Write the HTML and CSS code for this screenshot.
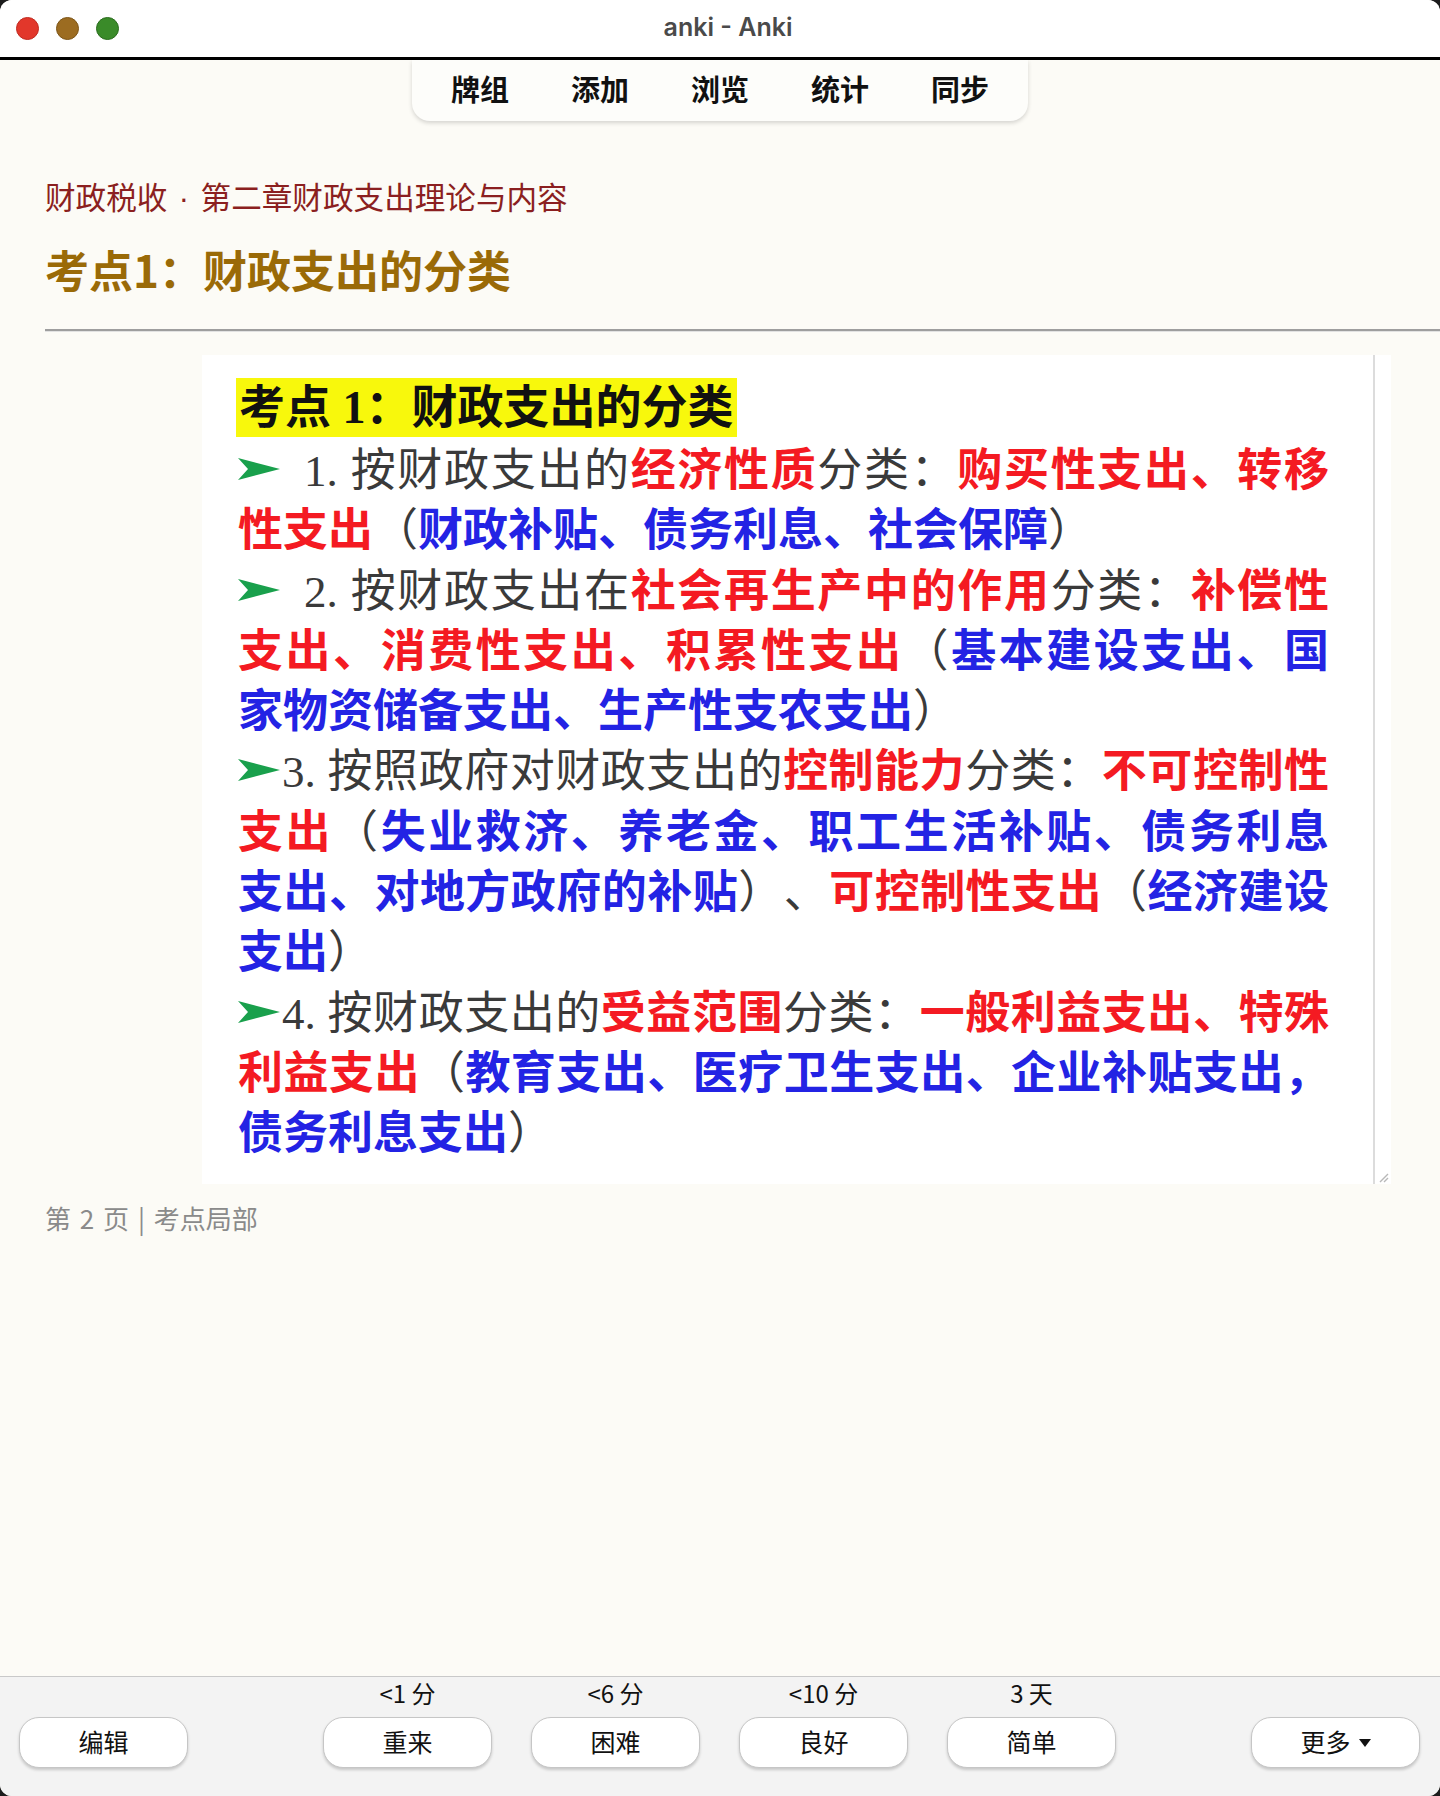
FILE: index.html
```html
<!DOCTYPE html>
<html lang="zh-CN">
<head>
<meta charset="utf-8">
<title>anki - Anki</title>
<link rel="stylesheet" href="styles.css">
</head>
<body>
<div class="window">
  <header class="titlebar">
    <div class="lights">
      <span class="light red"></span>
      <span class="light yellow"></span>
      <span class="light green"></span>
    </div>
    <div class="title">anki - Anki</div>
    <div></div>
  </header>

  <nav class="toolbar-wrap">
    <div class="toolbar">
      <span>牌组</span><span>添加</span><span>浏览</span><span>统计</span><span>同步</span>
    </div>
  </nav>

  <main class="content">
    <div class="crumb">财政税收<span class="dot"> · </span>第二章财政支出理论与内容</div>
    <h1 class="heading">考点1：财政支出的分类</h1>
    <hr class="rule">

    <div class="frame">
      <div class="sheet">
        <div class="sheet-title"><span>考点 1：财政支出的分类</span></div>
        <div class="ln j"><svg class="arrow sp" viewBox="0 0 42 24" width="42" height="24"><polygon points="0,1 42,12 0,23 10,12"/></svg><span class="k">1. 按财政支出的</span><span class="r">经济性质</span><span class="k">分类：</span><span class="r">购买性支出、转移</span></div>
        <div class="ln"><span class="r">性支出</span><span class="k">（</span><span class="b">财政补贴、债务利息、社会保障</span><span class="k">）</span></div>
        <div class="ln j"><svg class="arrow sp" viewBox="0 0 42 24" width="42" height="24"><polygon points="0,1 42,12 0,23 10,12"/></svg><span class="k">2. 按财政支出在</span><span class="r">社会再生产中的作用</span><span class="k">分类：</span><span class="r">补偿性</span></div>
        <div class="ln j"><span class="r">支出、消费性支出、积累性支出</span><span class="k">（</span><span class="b">基本建设支出、国</span></div>
        <div class="ln"><span class="b">家物资储备支出、生产性支农支出</span><span class="k">）</span></div>
        <div class="ln j"><svg class="arrow" viewBox="0 0 42 24" width="42" height="24"><polygon points="0,1 42,12 0,23 10,12"/></svg><span class="k">3. 按照政府对财政支出的</span><span class="r">控制能力</span><span class="k">分类：</span><span class="r">不可控制性</span></div>
        <div class="ln j"><span class="r">支出</span><span class="k">（</span><span class="b">失业救济、养老金、职工生活补贴、债务利息</span></div>
        <div class="ln j"><span class="b">支出、对地方政府的补贴</span><span class="k">）、</span><span class="r">可控制性支出</span><span class="k">（</span><span class="b">经济建设</span></div>
        <div class="ln"><span class="b">支出</span><span class="k">）</span></div>
        <div class="ln j"><svg class="arrow" viewBox="0 0 42 24" width="42" height="24"><polygon points="0,1 42,12 0,23 10,12"/></svg><span class="k">4. 按财政支出的</span><span class="r">受益范围</span><span class="k">分类：</span><span class="r">一般利益支出、特殊</span></div>
        <div class="ln j"><span class="r">利益支出</span><span class="k">（</span><span class="b">教育支出、医疗卫生支出、企业补贴支出，</span></div>
        <div class="ln"><span class="b">债务利息支出</span><span class="k">）</span></div>
      </div>
      <svg class="grip" viewBox="0 0 12 12" width="12" height="12"><path d="M11 3 L3 11 M11 7 L7 11"/></svg>
    </div>

    <div class="meta">第 2 页 | 考点局部</div>
  </main>

  <footer class="bar">
    <div class="col">
      <div class="due"></div>
      <button class="btn">编辑</button>
    </div>
    <div class="answers">
      <div class="col"><div class="due">&lt;1 分</div><button class="btn">重来</button></div>
      <div class="col"><div class="due">&lt;6 分</div><button class="btn">困难</button></div>
      <div class="col"><div class="due">&lt;10 分</div><button class="btn">良好</button></div>
      <div class="col"><div class="due">3 天</div><button class="btn">简单</button></div>
    </div>
    <div class="col more">
      <div class="due"></div>
      <button class="btn">更多 <span class="caret"></span></button>
    </div>
  </footer>
</div>
</body>
</html>
```

FILE: styles.css
```css
* { box-sizing: border-box; }

html, body {
  margin: 0;
  padding: 0;
  background: #1c1c1c;
}

body {
  font-family: "Noto Sans CJK SC", "Noto Sans", sans-serif;
}

.window {
  width: 1440px;
  height: 1796px;
  background: #fcfbf6;
  border-radius: 12px;
  overflow: hidden;
  display: flex;
  flex-direction: column;
}

/* title bar */
.titlebar {
  height: 60px;
  flex: none;
  background: #ffffff;
  border-bottom: 3px solid #000;
  display: grid;
  grid-template-columns: 1fr auto 1fr;
  align-items: center;
  padding-left: 16px;
}

.lights {
  display: flex;
  gap: 17px;
  align-items: center;
}

.light {
  width: 23px;
  height: 23px;
  border-radius: 50%;
  display: block;
}
.light.red { background: #e2372b; border: 1px solid #c12a20; }
.light.yellow { background: #9c6c21; border: 1px solid #7d5517; }
.light.green { background: #3a8b29; border: 1px solid #2a6c1d; }

.title {
  font-family: Inter, "Liberation Sans", sans-serif;
  font-weight: 600;
  font-size: 25px;
  color: #4a4a4a;
  padding-bottom: 4px;
}

/* toolbar */
.toolbar-wrap {
  display: flex;
  justify-content: center;
  flex: none;
}

.toolbar {
  height: 61px;
  padding: 0 39px 5px 39px;
  display: flex;
  align-items: center;
  gap: 62px;
  background: #fdfdfa;
  border-radius: 0 0 18px 18px;
  box-shadow: 0 2px 4px rgba(0, 0, 0, 0.16);
  font-size: 29px;
  font-weight: 700;
  color: #111;
}

/* content */
.content {
  padding-left: 45px;
  flex: none;
}

.crumb {
  margin-top: 55px;
  height: 40px;
  font-size: 30.6px;
  line-height: 40px;
  color: #8b1f20;
}

.crumb .dot {
  font-family: "Liberation Sans", sans-serif;
  word-spacing: 3px;
}

.heading {
  margin: 25px 0 0;
  font-size: 44px;
  line-height: 56px;
  font-weight: 700;
  color: #9a6a07;
}

.rule {
  margin: 32px 0 0;
  border: 0;
  border-top: 2px solid #9e9e9e;
  border-bottom: 1px solid #e2e2e2;
  height: 0;
}

.frame {
  margin: 23px 0 0 157px;
  width: 1189px;
  background: #ffffff;
  display: flex;
  position: relative;
}

.sheet {
  width: 1173px;
  flex: none;
  border-right: 2px solid #dcdcdc;
  padding: 23px 44px 23px 36px;
  font-family: "Liberation Serif", "Noto Sans CJK SC", serif;
  font-size: 45px;
  line-height: 60.3px;
  color: #333;
  text-spacing-trim: space-all;
}

.sheet-title {
  height: 59px;
  margin: 0 0 0 -2px;
}

.sheet-title span {
  display: inline-block;
  height: 59px;
  line-height: 59px;
  padding: 0 3px;
  background: #f8f80c;
  font-family: "Liberation Serif", "Noto Sans CJK SC", serif;
  font-size: 46px;
  font-weight: 700;
  color: #111;
}

.ln {
  height: 60.3px;
  white-space: nowrap;
}

.ln.j {
  text-align: justify;
  text-align-last: justify;
  white-space: normal;
}

.k { font-weight: 400; color: #3a3a3a; }
.r { font-family: "Noto Sans CJK SC", sans-serif; font-weight: 700; color: #f41a22; }
.b { font-family: "Noto Sans CJK SC", sans-serif; font-weight: 700; color: #2323e4; }

.arrow {
  fill: #19a04c;
  vertical-align: 5px;
  margin-right: 2px;
}
.arrow.sp { margin-right: 24px; }

.grip {
  position: absolute;
  right: 2px;
  bottom: 1px;
  stroke: #b8b8b8;
  stroke-width: 1.4;
  fill: none;
}

.meta {
  margin-top: 17px;
  height: 34px;
  font-size: 26px;
  line-height: 34px;
  color: #8a8a8a;
  word-spacing: 3px;
}

/* bottom bar */
.bar {
  margin-top: auto;
  height: 120px;
  flex: none;
  background: #f3f3f3;
  border-top: 1px solid #c9c9c9;
  display: flex;
  align-items: flex-end;
  padding: 0 20px 28px 19px;
}

.answers {
  display: flex;
  gap: 39px;
  margin-left: 135px;
}

.col {
  width: 169px;
  display: flex;
  flex-direction: column;
  align-items: center;
}

.col.more { margin-left: auto; }

.due {
  height: 34px;
  line-height: 32px;
  font-size: 24px;
  color: #111;
}

.btn {
  margin-top: 6px;
  width: 169px;
  height: 51px;
  border: 1px solid #c6c6c6;
  border-radius: 20px;
  background: #ffffff;
  box-shadow: 0 2px 3px rgba(0, 0, 0, 0.18);
  font-family: "Noto Sans CJK SC", sans-serif;
  font-size: 25px;
  color: #111;
  padding: 0 0 3px;
  display: flex;
  align-items: center;
  justify-content: center;
  gap: 8px;
}

.caret {
  display: inline-block;
  width: 0;
  height: 0;
  border-left: 6px solid transparent;
  border-right: 6px solid transparent;
  border-top: 8px solid #111;
  margin-top: 3px;
}
```
